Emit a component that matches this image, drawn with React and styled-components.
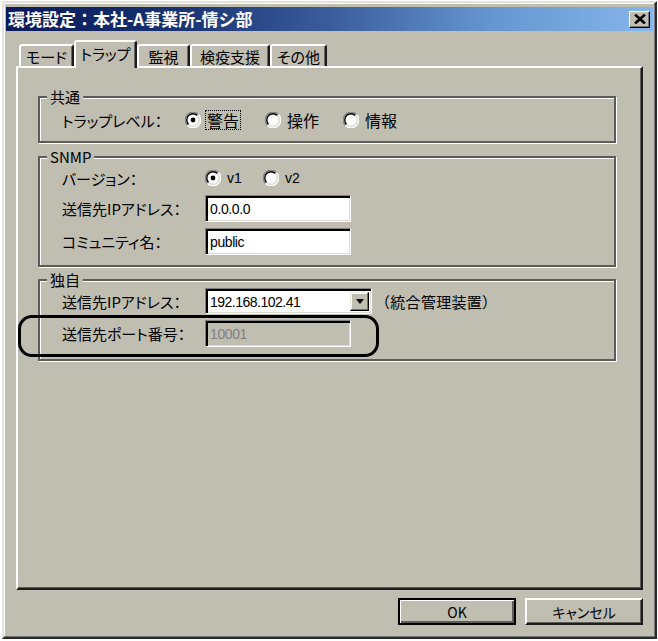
import styled, { createGlobalStyle } from 'styled-components'

const FACE = '#c0bdb1'
const ETCH = '#5c5b57'

const GlobalStyle = createGlobalStyle`
  html, body {
    margin: 0;
    padding: 0;
    background: #fff;
  }
  body {
    font-family: "Noto Sans CJK JP", "Noto Sans", sans-serif;
    font-size: 14px;
    color: #000;
  }
  * {
    box-sizing: border-box;
  }
`

export default function App() {
  return (
    <>
      <GlobalStyle />
      <Window>
        <TitleBar>
          <Title>環境設定：本社-A事業所-情シ部</Title>
          <CloseButton aria-label="閉じる">
            <svg width="12" height="10" viewBox="0 0 12 10">
              <path d="M1 0.5 L11 9.5 M11 0.5 L1 9.5" stroke="#000" strokeWidth="2.6" />
            </svg>
          </CloseButton>
        </TitleBar>

        <Body>
          <TabStrip>
            <Tab $w={55}>モード</Tab>
            <Tab $w={63} $active>トラップ</Tab>
            <Tab $w={53}>監視</Tab>
            <Tab $w={80}>検疫支援</Tab>
            <Tab $w={57}>その他</Tab>
          </TabStrip>

          <Panel>
            <Group $gap={6}>
              <Legend>共通</Legend>
              <GroupBody $pt={4} $pb={10}>
                <Row $h={22}>
                  <Label $w={123}>トラップレベル：</Label>
                  <Radio $w={80} checked focus label="警告" />
                  <Radio $w={78} label="操作" />
                  <Radio $w={60} label="情報" />
                </Row>
              </GroupBody>
            </Group>

            <Group $gap={5}>
              <Legend>SNMP</Legend>
              <GroupBody $pt={2} $pb={10}>
                <Row $h={22}>
                  <Label $w={143}>バージョン：</Label>
                  <Radio $w={58} checked label="v1" latin />
                  <Radio $w={50} label="v2" latin />
                </Row>
                <Row $h={27}>
                  <Label $w={143}>送信先IPアドレス：</Label>
                  <TextBox>0.0.0.0</TextBox>
                </Row>
                <Row $h={27}>
                  <Label $w={143}>コミュニティ名：</Label>
                  <TextBox>public</TextBox>
                </Row>
              </GroupBody>
            </Group>

            <Group $gap={0}>
              <Legend>独自</Legend>
              <GroupBody $pt={0} $pb={12}>
                <Row $h={26}>
                  <Label $w={143}>送信先IPアドレス：</Label>
                  <Combo>
                    <ComboText>192.168.102.41</ComboText>
                    <DropButton>
                      <svg width="8" height="5" viewBox="0 0 8 5">
                        <path d="M0 0 H8 L4 5 Z" fill="#000" />
                      </svg>
                    </DropButton>
                  </Combo>
                  <Note>（統合管理装置）</Note>
                </Row>
                <Row $h={27}>
                  <Callout />
                  <Label $w={143}>送信先ポート番号：</Label>
                  <TextBox $disabled>10001</TextBox>
                </Row>
              </GroupBody>
            </Group>
          </Panel>

          <ButtonRow>
            <Button $default>OK</Button>
            <Button>キャンセル</Button>
          </ButtonRow>
        </Body>
      </Window>
    </>
  )
}

function Radio({ label, checked, focus, latin, $w }) {
  return (
    <RadioOption $w={$w}>
      <svg width="16" height="16" viewBox="0 0 16 16">
        <circle cx="8" cy="8" r="7" fill="#fff" />
        <path d="M2.5 13.5 A7.5 7.5 0 0 1 13.5 2.5" fill="none" stroke="#808080" strokeWidth="1.2" />
        <path d="M3.6 12.4 A6 6 0 0 1 12.4 3.6" fill="none" stroke="#000" strokeWidth="1.4" />
        <path d="M13.5 2.5 A7.5 7.5 0 0 1 2.5 13.5" fill="none" stroke="#fff" strokeWidth="1.2" />
        <path d="M12.4 3.6 A6 6 0 0 1 3.6 12.4" fill="none" stroke="#dedbd2" strokeWidth="1.4" />
        {checked && <circle cx="8" cy="8" r="2.4" fill="#000" />}
      </svg>
      <RadioText $focus={focus} $latin={latin}>{label}</RadioText>
    </RadioOption>
  )
}

const Window = styled.div`
  width: 655px;
  height: 638px;
  margin: 1px 0 0 2px;
  padding: 4px 2px 0 2px;
  display: flex;
  flex-direction: column;
  background: ${FACE};
  border: 2px solid;
  border-color: #e4e2da #2a2a2a #2a2a2a #e4e2da;
  box-shadow: inset -1px -1px 0 #777, inset 1px 1px 0 #fff;
`

const TitleBar = styled.div`
  height: 24px;
  display: flex;
  align-items: center;
  justify-content: space-between;
  padding: 0 3px 0 2px;
  background: linear-gradient(to right, #0a1a58 0%, #17306e 25%, #3b5c9c 50%, #6596cf 75%, #86b5ec 100%);
`

const Title = styled.span`
  color: #fff;
  font-weight: 700;
  font-size: 17px;
  line-height: 24px;
`

const CloseButton = styled.div`
  width: 21px;
  height: 17px;
  display: flex;
  align-items: center;
  justify-content: center;
  background: ${FACE};
  border: 1px solid;
  border-color: #fff #000 #000 #fff;
  box-shadow: inset -1px -1px 0 #777;
`

const Body = styled.div`
  flex: 1;
  display: flex;
  flex-direction: column;
  padding: 9px 10px 0 10px;
`

const TabStrip = styled.div`
  height: 26px;
  display: flex;
  align-items: flex-end;
  padding-left: 3px;
  position: relative;
  z-index: 1;
`

const Tab = styled.div`
  width: ${p => p.$w}px;
  height: ${p => (p.$active ? 28 : 22)}px;
  margin-bottom: ${p => (p.$active ? -2 : 0)}px;
  display: flex;
  align-items: center;
  justify-content: center;
  padding-bottom: ${p => (p.$active ? 4 : 0)}px;
  font-size: 15px;
  font-feature-settings: "palt";
  background: ${FACE};
  border-top: 2px solid #fff;
  border-left: 2px solid #fff;
  border-right: 2px solid #1c1c1c;
  border-radius: 3px 3px 0 0;
  box-shadow: inset -1px 0 0 #6a6965;
`

const Panel = styled.div`
  height: 524px;
  display: flex;
  flex-direction: column;
  padding: 21px 25px 0 20px;
  border: 2px solid;
  border-color: #fff #1c1c1c #1c1c1c #fff;
  box-shadow: inset -1px -1px 0 #5e5d59;
`

const Group = styled.fieldset`
  margin: 0 0 ${p => p.$gap}px;
  padding: 0;
  min-width: 0;
  border: 2px solid ${ETCH};
  box-shadow: inset 1px 1px 0 #fff, 1px 1px 0 #fff;
`

const Legend = styled.legend`
  margin-left: 7px;
  padding: 0 3px;
  font-size: 15px;
  line-height: 16px;
  background: ${FACE};
`

const GroupBody = styled.div`
  display: flex;
  flex-direction: column;
  gap: 6px;
  padding: ${p => p.$pt}px 0 ${p => p.$pb}px 22px;
`

const Row = styled.div`
  position: relative;
  height: ${p => p.$h}px;
  display: flex;
  align-items: center;
`

const Label = styled.span`
  width: ${p => p.$w}px;
  flex-shrink: 0;
  white-space: nowrap;
  font-size: 15px;
  font-feature-settings: "palt";
`

const RadioOption = styled.div`
  width: ${p => p.$w}px;
  display: flex;
  align-items: center;
  gap: 5px;
`

const RadioText = styled.span`
  padding: 0 1px;
  line-height: 18px;
  font-size: ${p => (p.$latin ? 14 : 16)}px;
  font-family: ${p => (p.$latin ? '"Liberation Sans", sans-serif' : 'inherit')};
  outline: ${p => (p.$focus ? '1px dotted #000' : 'none')};
`

const TextBox = styled.div`
  width: 146px;
  height: 27px;
  display: flex;
  align-items: center;
  padding-left: 4px;
  font-family: "Liberation Sans", sans-serif;
  font-size: 14px;
  letter-spacing: -0.4px;
  color: ${p => (p.$disabled ? '#808080' : '#000')};
  background: ${p => (p.$disabled ? FACE : '#fff')};
  border: 1px solid;
  border-color: #808080 #fff #fff #808080;
  box-shadow: inset 2px 2px 0 #000, inset -1px -1px 0 #dcdad2;
`

const Combo = styled.div`
  width: 167px;
  height: 26px;
  display: flex;
  align-items: stretch;
  padding: 3px 2px 2px 3px;
  background: #fff;
  border: 1px solid;
  border-color: #808080 #fff #fff #808080;
  box-shadow: inset 2px 2px 0 #000, inset -1px -1px 0 #dcdad2;
`

const ComboText = styled.span`
  flex: 1;
  display: flex;
  align-items: center;
  padding-left: 1px;
  font-family: "Liberation Sans", sans-serif;
  font-size: 14px;
  letter-spacing: -0.5px;
`

const DropButton = styled.div`
  width: 19px;
  display: flex;
  align-items: center;
  justify-content: center;
  background: ${FACE};
  border: 1px solid;
  border-color: #e8e6df #000 #000 #e8e6df;
  box-shadow: inset -1px -1px 0 #6f6e6a, inset 1px 1px 0 #fff;
`

const Note = styled.span`
  margin-left: 3px;
  white-space: nowrap;
  font-size: 15px;
  letter-spacing: 0.3px;
`

const Callout = styled.div`
  position: absolute;
  left: -44px;
  top: -5px;
  width: 361px;
  height: 42px;
  border: 3px solid #000;
  border-radius: 14px;
  pointer-events: none;
`

const ButtonRow = styled.div`
  display: flex;
  justify-content: flex-end;
  gap: 9px;
  margin-top: 8px;
`

const Button = styled.div`
  width: 118px;
  height: 27px;
  display: flex;
  align-items: center;
  justify-content: center;
  font-size: 14px;
  font-feature-settings: "palt";
  background: ${FACE};
  border: ${p => (p.$default ? '2px solid #000' : '2px solid')};
  border-color: ${p => (p.$default ? '#000' : '#fff #1c1c1c #1c1c1c #fff')};
  box-shadow: ${p =>
    p.$default
      ? 'inset 1px 1px 0 #fff, inset -2px -2px 0 #5e5d59'
      : 'inset -1px -1px 0 #5e5d59'};
`
